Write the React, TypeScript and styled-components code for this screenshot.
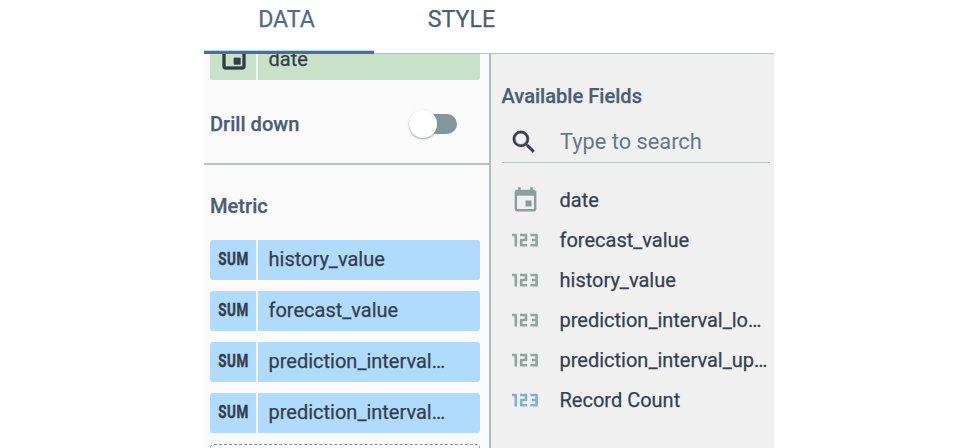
import React from "react";
import styled, { createGlobalStyle } from "styled-components";
import { MdEvent, MdSearch } from "react-icons/md";

const GlobalStyle = createGlobalStyle`
  * { box-sizing: border-box; }
  body { margin: 0; background: #fff; font-family: Roboto, sans-serif; }
`;

const Page = styled.div`
  width: 978px;
  height: 448px;
  padding-left: 204px;
  overflow: hidden;
  background: #fff;
`;

const Panel = styled.div`
  width: 570px;
  height: 448px;
  display: flex;
  flex-direction: column;
  overflow: hidden;
`;

const Tabs = styled.div`
  display: flex;
  height: 54px;
  flex: none;
  border-bottom: 1px solid #b3c4bc;
`;

const Tab = styled.div<{ $active?: boolean; $width: number }>`
  width: ${(p) => p.$width}px;
  height: 54px;
  padding: 6px 5px 0 0;
  text-align: center;
  font-size: 23.2px;
  line-height: 27px;
  font-weight: 400;
  -webkit-text-stroke: 0.25px currentColor;
  color: ${(p) => (p.$active ? "#566987" : "#4c5d70")};
  border-bottom: ${(p) => (p.$active ? "3px solid #566b8c" : "0")};
  box-shadow: ${(p) => (p.$active ? "inset 0 -1px #b0dbff" : "none")};
`;

const Columns = styled.div`
  display: flex;
  flex: 1;
  min-height: 0;
`;

const Setup = styled.div`
  width: 287px;
  background: #fafafa;
  border-right: 2px solid #b0babf;
  overflow: hidden;
`;

const DimensionSection = styled.section`
  height: 111px;
  border-bottom: 2px solid #b3c8bb;
  padding: 0 10px 0 6px;
  overflow: hidden;
`;

const MetricSection = styled.section`
  padding: 27px 10px 0 6px;
`;

const Heading = styled.h3`
  margin: 0;
  font-size: 20.1px;
  line-height: 28px;
  font-weight: 500;
  color: #4c5d76;
  -webkit-text-stroke: 0.25px currentColor;
`;

const Chip = styled.div<{ $kind: "dimension" | "metric" }>`
  display: flex;
  height: 40px;
  width: 269.5px;
  gap: 2px;
  border-radius: 3px;
  overflow: hidden;
  background: #f4f8fa;
  color: #343e48;
  margin-top: ${(p) => (p.$kind === "dimension" ? "-14px" : "0")};
  > * { background: ${(p) => (p.$kind === "dimension" ? "#c8e1c9" : "#b0dbff")}; }
`;

const ChipTag = styled.div`
  width: 46px;
  display: flex;
  align-items: center;
  justify-content: center;
  padding-left: 2px;
  svg { margin-bottom: 4px; }
  svg path:last-child { stroke: currentColor; stroke-width: 0.6px; }
`;

const TagText = styled.span`
  font-size: 18px;
  line-height: 20px;
  margin-bottom: 2px;
  font-weight: 700;
  letter-spacing: 0.8px;
  transform: scaleX(0.75);
  -webkit-text-stroke: 0.4px currentColor;
`;

const ChipLabel = styled.div`
  flex: 1;
  padding-left: 10.5px;
  font-size: 20px;
  line-height: 39px;
  white-space: nowrap;
  -webkit-text-stroke: 0.25px currentColor;
`;

const ChipList = styled.div`
  display: flex;
  flex-direction: column;
  gap: 11px;
  margin-top: 20px;
`;

const DropZone = styled.div`
  height: 40px;
  width: 269.5px;
  border: 1px dashed #809a93;
  border-radius: 4px;
`;

const DrillRow = styled.div`
  display: flex;
  align-items: center;
  justify-content: space-between;
  margin-top: 30px;
  padding-right: 22px;
  height: 28px;
`;

const Track = styled.div`
  width: 48px;
  height: 20px;
  border-radius: 10px;
  background: #84959b;
  display: flex;
  align-items: center;
`;

const Thumb = styled.div`
  width: 28px;
  height: 28px;
  flex: none;
  border-radius: 50%;
  background: #fff;
  box-shadow: 0 1px 2px #93a59f;
`;

const Fields = styled.aside`
  width: 283px;
  background: #f0f0f0;
  padding: 28px 4px 0 10.5px;
`;

const Search = styled.div`
  display: flex;
  align-items: center;
  height: 53px;
  padding: 10px 0 0 7.5px;
  border-bottom: 1px solid #b5c9b9;
  font-size: 21.8px;
  color: #667889;
  svg { color: #333f4d; margin: 2px 21px 0 0; }
  svg path:last-child { stroke: currentColor; stroke-width: 0.3px; }
`;

const FieldList = styled.div`
  padding-top: 17px;
`;

const FieldRow = styled.div`
  display: flex;
  align-items: center;
  height: 40px;
  font-size: 20px;
  color: #344150;
  white-space: nowrap;
  -webkit-text-stroke: 0.25px currentColor;
`;

const FieldIcon = styled.span<{ $color: string }>`
  width: 58px;
  flex: none;
  display: flex;
  padding-left: 9.5px;
  color: ${(p) => p.$color};
`;

/* Angular numeric-field glyph: a flagged bar followed by two squared hooks. */
const NumberIcon = () => (
  <svg width="28" height="14" viewBox="0 0 28 14" fill="none" stroke="currentColor" strokeWidth="2.6" strokeLinejoin="round">
    <path d="M1 2H4.8V13.5" />
    <path d="M9 2H15V7H10.2V12.2H16.2" />
    <path d="M19.5 2H25.6V12.2H19.5M21 7H25.6" />
  </svg>
);

const metrics = ["history_value", "forecast_value", "prediction_interval…", "prediction_interval…"];
const numberFields = [
  { name: "forecast_value", color: "#8fa69f" },
  { name: "history_value", color: "#8fa69f" },
  { name: "prediction_interval_lo…", color: "#8fa69f" },
  { name: "prediction_interval_up…", color: "#8fa69f" },
  { name: "Record Count", color: "#84afd3" },
];

export default function App() {
  return (
    <>
      <GlobalStyle />
      <Page>
        <Panel>
          <Tabs>
            <Tab $active $width={170}>DATA</Tab>
            <Tab $width={180}>STYLE</Tab>
          </Tabs>
          <Columns>
            <Setup>
              <DimensionSection>
                <Chip $kind="dimension">
                  <ChipTag><MdEvent size={30} /></ChipTag>
                  <ChipLabel>date</ChipLabel>
                </Chip>
                <DrillRow>
                  <Heading>Drill down</Heading>
                  <Track><Thumb /></Track>
                </DrillRow>
              </DimensionSection>
              <MetricSection>
                <Heading>Metric</Heading>
                <ChipList>
                  {metrics.map((name, i) => (
                    <Chip $kind="metric" key={i}>
                      <ChipTag><TagText>SUM</TagText></ChipTag>
                      <ChipLabel>{name}</ChipLabel>
                    </Chip>
                  ))}
                  <DropZone />
                </ChipList>
              </MetricSection>
            </Setup>
            <Fields>
              <Heading>Available Fields</Heading>
              <Search><MdSearch size={30} />Type to search</Search>
              <FieldList>
                <FieldRow>
                  <FieldIcon $color="#8a9ea0"><MdEvent size={29} /></FieldIcon>
                  date
                </FieldRow>
                {numberFields.map((f) => (
                  <FieldRow key={f.name}>
                    <FieldIcon $color={f.color}><NumberIcon /></FieldIcon>
                    {f.name}
                  </FieldRow>
                ))}
              </FieldList>
            </Fields>
          </Columns>
        </Panel>
      </Page>
    </>
  );
}
